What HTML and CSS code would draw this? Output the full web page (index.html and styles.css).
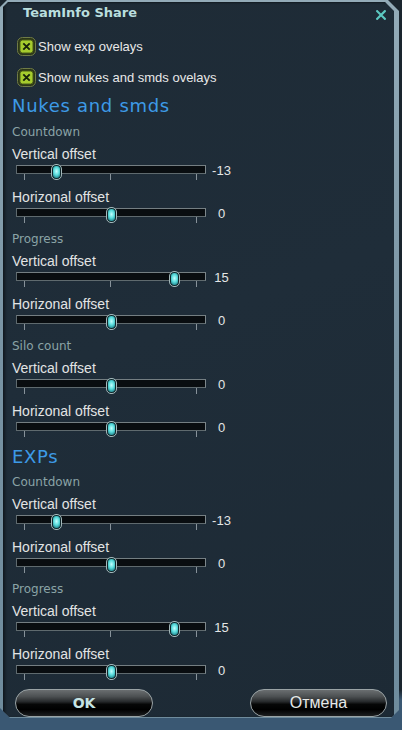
FILE: index.html
```html
<!DOCTYPE html>
<html lang="en">
<head>
<meta charset="utf-8">
<title>TeamInfo Share</title>
<link rel="stylesheet" href="styles.css">
</head>
<body>
<div class="frame">
  <div class="panel">
    <div class="titlebar">
      <span class="title">TeamInfo Share</span>
      <svg class="close" width="10" height="10" viewBox="0 0 10 10"><path d="M1.2 1.2 L8.8 8.8 M8.8 1.2 L1.2 8.8" stroke="#5cc9c2" stroke-width="2.2" stroke-linecap="square"/></svg>
    </div>

    <div class="checks">
      <div class="check">
        <svg class="box" width="19" height="19" viewBox="0 0 19 19"><rect x="0.5" y="0.5" width="18" height="18" rx="5" fill="#2b3519" stroke="#6f7b46"/><rect x="3" y="3" width="13" height="13" rx="2.5" fill="#a6cc2e" stroke="#4a5e16"/><path d="M6.3 6.3 L12.7 12.7 M12.7 6.3 L6.3 12.7" stroke="#17220a" stroke-width="1.9"/></svg>
        <span>Show exp ovelays</span>
      </div>
      <div class="check">
        <svg class="box" width="19" height="19" viewBox="0 0 19 19"><rect x="0.5" y="0.5" width="18" height="18" rx="5" fill="#2b3519" stroke="#6f7b46"/><rect x="3" y="3" width="13" height="13" rx="2.5" fill="#a6cc2e" stroke="#4a5e16"/><path d="M6.3 6.3 L12.7 12.7 M12.7 6.3 L6.3 12.7" stroke="#17220a" stroke-width="1.9"/></svg>
        <span>Show nukes and smds ovelays</span>
      </div>
    </div>

    <div class="heading first">Nukes and smds</div>

    <div class="sub">Countdown</div>
    <div class="label">Vertical offset</div>
    <div class="slider-row"><div class="slider"><div class="track"></div><div class="ticks"><i></i><i></i><i></i></div><div class="thumb" style="left:34.9px"></div></div><div class="value">-13</div></div>
    <div class="label">Horizonal offset</div>
    <div class="slider-row"><div class="slider"><div class="track"></div><div class="ticks"><i></i><i></i><i></i></div><div class="thumb" style="left:89.5px"></div></div><div class="value">0</div></div>

    <div class="sub">Progress</div>
    <div class="label">Vertical offset</div>
    <div class="slider-row"><div class="slider"><div class="track"></div><div class="ticks"><i></i><i></i><i></i></div><div class="thumb" style="left:152.5px"></div></div><div class="value">15</div></div>
    <div class="label">Horizonal offset</div>
    <div class="slider-row"><div class="slider"><div class="track"></div><div class="ticks"><i></i><i></i><i></i></div><div class="thumb" style="left:89.5px"></div></div><div class="value">0</div></div>

    <div class="sub">Silo count</div>
    <div class="label">Vertical offset</div>
    <div class="slider-row"><div class="slider"><div class="track"></div><div class="ticks"><i></i><i></i><i></i></div><div class="thumb" style="left:89.5px"></div></div><div class="value">0</div></div>
    <div class="label">Horizonal offset</div>
    <div class="slider-row"><div class="slider"><div class="track"></div><div class="ticks"><i></i><i></i><i></i></div><div class="thumb" style="left:89.5px"></div></div><div class="value">0</div></div>

    <div class="heading">EXPs</div>

    <div class="sub">Countdown</div>
    <div class="label">Vertical offset</div>
    <div class="slider-row"><div class="slider"><div class="track"></div><div class="ticks"><i></i><i></i><i></i></div><div class="thumb" style="left:34.9px"></div></div><div class="value">-13</div></div>
    <div class="label">Horizonal offset</div>
    <div class="slider-row"><div class="slider"><div class="track"></div><div class="ticks"><i></i><i></i><i></i></div><div class="thumb" style="left:89.5px"></div></div><div class="value">0</div></div>

    <div class="sub">Progress</div>
    <div class="label">Vertical offset</div>
    <div class="slider-row"><div class="slider"><div class="track"></div><div class="ticks"><i></i><i></i><i></i></div><div class="thumb" style="left:152.5px"></div></div><div class="value">15</div></div>
    <div class="label">Horizonal offset</div>
    <div class="slider-row"><div class="slider"><div class="track"></div><div class="ticks"><i></i><i></i><i></i></div><div class="thumb" style="left:89.5px"></div></div><div class="value">0</div></div>

    <div class="buttons">
      <button class="btn ok">OK</button>
      <button class="btn cancel">Отмена</button>
    </div>
  </div>
</div>
</body>
</html>
```
FILE: styles.css
```css
* { box-sizing: border-box; }
html, body { margin: 0; padding: 0; }
body {
  width: 402px;
  height: 730px;
  overflow: hidden;
  background: linear-gradient(to bottom, #1a252e 0, #1a252e 690px, #3a5873 700px, #3a5873 100%);
  font-family: "DejaVu Sans", sans-serif;
}
.frame {
  width: 399px;
  height: 718px;
  padding: 2px 5px 1px 3px;
  background: linear-gradient(to bottom, #93abb8 0, #7893a3 50%, #6f8c9d 100%);
  clip-path: polygon(7px 0, calc(100% - 11px) 0, 100% 11px, 100% calc(100% - 8px), calc(100% - 8px) 100%, 10px 100%, 0 calc(100% - 10px), 0 7px);
}
.panel {
  height: 715px;
  background: linear-gradient(160deg, #1e2b36 0%, #1f2d39 45%, #1d2a35 100%);
  box-shadow: inset 3px 0 3px -1px rgba(0, 0, 0, 0.45), inset 0 2px 2px -1px rgba(0, 0, 0, 0.35);
  clip-path: polygon(5px 0, calc(100% - 9px) 0, 100% 9px, 100% 100%, 0 100%, 0 5px);
  display: flex;
  flex-direction: column;
}
.titlebar {
  margin-top: 3px;
  height: 15px;
  padding: 0 8px 0 20px;
  display: flex;
  justify-content: space-between;
  align-items: center;
}
.title {
  font-family: "DejaVu Sans", sans-serif;
  font-weight: bold;
  font-size: 13px;
  line-height: 15px;
  color: #b9dede;
}
.close { display: block; margin-top: 4px; }
.checks {
  margin-top: 16px;
  padding-left: 14px;
  display: flex;
  flex-direction: column;
  gap: 11px;
}
.check {
  height: 20px;
  display: flex;
  align-items: center;
  gap: 2px;
  font-family: "Liberation Sans", Arial, sans-serif;
  font-size: 13px;
  color: #e8e8e8;
}
.box { display: block; flex: none; }
.heading {
  padding-left: 9px;
  font-family: "DejaVu Sans", sans-serif;
  font-size: 18px;
  letter-spacing: 0.7px;
  line-height: 21px;
  height: 21px;
  color: #3d9ae6;
  margin-bottom: 8px;
}
.heading.first { margin-top: 7.5px; margin-bottom: 9px; }
.sub {
  padding-left: 9px;
  font-size: 12px;
  line-height: 14px;
  height: 14px;
  margin-bottom: 7px;
  color: #8aa3a6;
}
.label {
  padding-left: 9px;
  font-family: "Liberation Sans", Arial, sans-serif;
  font-size: 14px;
  line-height: 16px;
  height: 16px;
  color: #e2e4e4;
}
.slider-row {
  height: 27px;
  padding-left: 13px;
  display: flex;
}
.slider {
  position: relative;
  width: 190px;
  height: 27px;
}
.track {
  margin-top: 3px;
  height: 9px;
  border: 1px solid #5f6a6e;
  border-top-color: #747e82;
  border-right-color: #7d878b;
  background: #090d10;
}
.ticks {
  height: 6px;
  padding: 0 9px 0 8px;
  display: flex;
  justify-content: space-between;
}
.ticks i {
  display: block;
  width: 1px;
  height: 6px;
  background: #87929a;
}
.thumb {
  position: absolute;
  top: 2px;
  width: 11px;
  height: 16px;
  border-radius: 5px;
  border: 1px solid #a3b8ba;
  background: radial-gradient(ellipse 60% 55% at 50% 45%, #c4ffff 0, #58dcdc 50%, #2a8f96 85%, #123a40 100%);
  box-shadow: inset 0 0 0 1px #10262b;
}
.value {
  width: 31px;
  margin-top: 2px;
  height: 14px;
  line-height: 14px;
  font-family: "Liberation Sans", Arial, sans-serif;
  font-size: 13px;
  text-align: center;
  color: #e4e6e6;
}
.buttons {
  margin-top: 0.5px;
  padding: 0 7px 0 12px;
  display: flex;
  justify-content: space-between;
}
.btn {
  height: 28px;
  border-radius: 14px;
  border: 1px solid #9aa3a5;
  padding: 0;
  margin: 0;
  background: linear-gradient(to bottom, #6a6e70 0%, #4c5052 25%, #26292b 45%, #060707 55%, #000 75%, #1c1e20 100%);
  display: flex;
  align-items: center;
  justify-content: center;
}
.ok {
  width: 138px;
  font-family: "DejaVu Sans", sans-serif;
  font-weight: bold;
  font-size: 14px;
  color: #c6e4e4;
}
.cancel {
  width: 137px;
  font-family: "Liberation Sans", Arial, sans-serif;
  font-size: 16px;
  color: #e6e8e8;
}
```
